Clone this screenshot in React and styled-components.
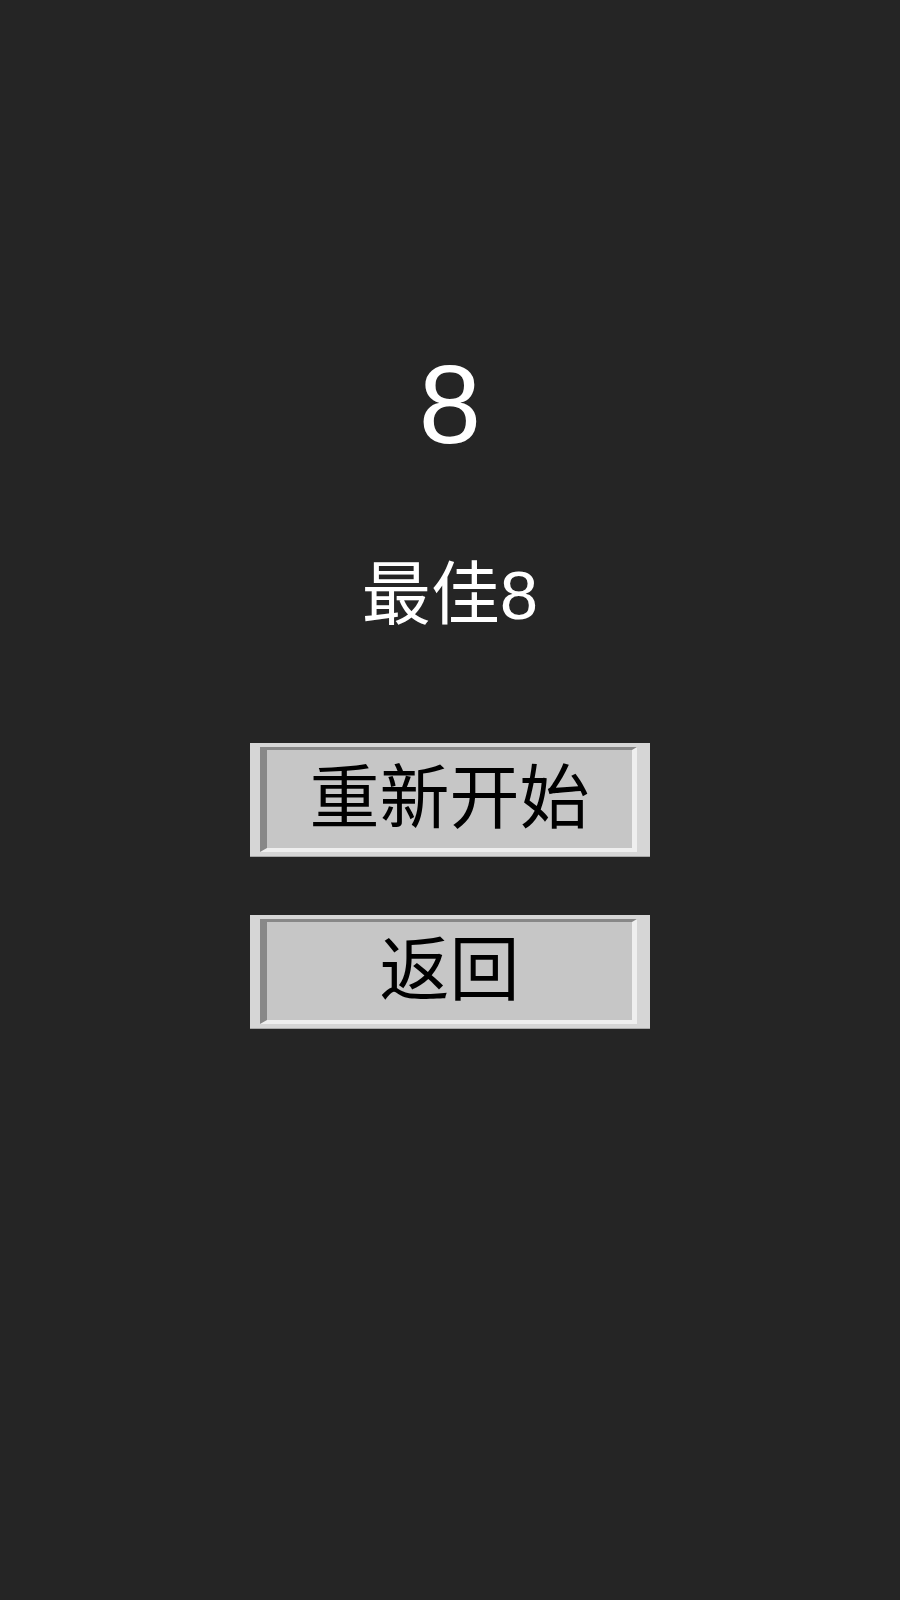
import React from "react";
import styled, { createGlobalStyle } from "styled-components";

const GlobalStyle = createGlobalStyle`
  html, body {
    margin: 0;
    padding: 0;
    background-color: #252525;
  }
  body {
    font-family: "Liberation Sans", "Noto Sans CJK SC", sans-serif;
  }
`;

const Screen = styled.div`
  width: 900px;
  height: 1600px;
  background-color: #252525;
  display: flex;
  flex-direction: column;
  align-items: center;
  padding-top: 345px;
  box-sizing: border-box;
`;

const Score = styled.div`
  color: #fff;
  font-size: 112px;
  line-height: 120px;
`;

const Best = styled.div`
  color: #fff;
  font-size: 69px;
  line-height: 80px;
  margin-top: 91px;
`;

const ButtonFrame = styled.div`
  width: 400px;
  height: 114px;
  box-sizing: border-box;
  background-color: #d6d6d6;
  padding: 4px 13px 4px 10px;
  margin-top: ${(props) => props.gap}px;
  border-bottom: 1px solid #a8a8a8;
  cursor: pointer;
`;

const ButtonFace = styled.div`
  height: 100%;
  box-sizing: border-box;
  background-color: #c6c6c6;
  border-style: solid;
  border-width: 3px 5px 4px 7px;
  border-color: #888 #efefef #efefef #888;
  display: flex;
  align-items: center;
  justify-content: center;
  color: #000;
  font-size: 70px;
  line-height: 1;
`;

function MenuButton({ label, gap }) {
  return (
    <ButtonFrame gap={gap}>
      <ButtonFace>{label}</ButtonFace>
    </ButtonFrame>
  );
}

function App() {
  return (
    <Screen>
      <GlobalStyle />
      <Score>8</Score>
      <Best>最佳8</Best>
      <MenuButton label="重新开始" gap={107} />
      <MenuButton label="返回" gap={58} />
    </Screen>
  );
}

export default App;
